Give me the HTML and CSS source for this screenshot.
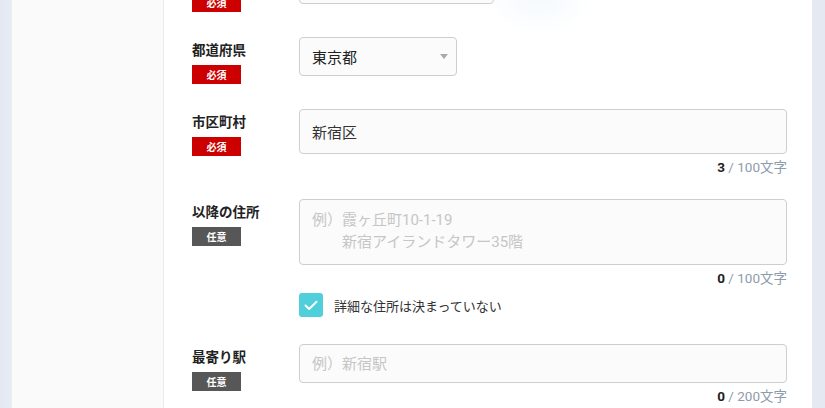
FILE: index.html
```html
<!DOCTYPE html>
<html lang="ja">
<head>
    <meta charset="UTF-8">
    <meta name="viewport" content="width=device-width, initial-scale=1.0">
    <title>住所の入力</title>
<link rel="stylesheet" href="styles.css">
</head>
<body>
    <div class="rail"></div>
    <aside class="sidebar"></aside>
    <main class="panel">
        <div class="glow"></div>

        <div class="row row-first">
            <div class="label-col">
                <div class="label">郵便番号</div>
                <span class="badge required">必須</span>
            </div>
            <div class="field-col">
                <input class="input input-short" type="text" value="">
            </div>
        </div>

        <div class="row">
            <div class="label-col">
                <div class="label">都道府県</div>
                <span class="badge required">必須</span>
            </div>
            <div class="field-col">
                <div class="select-wrap">
                    <select class="select">
                        <option>東京都</option>
                    </select>
                </div>
            </div>
        </div>

        <div class="row">
            <div class="label-col">
                <div class="label">市区町村</div>
                <span class="badge required">必須</span>
            </div>
            <div class="field-col">
                <input class="input input-tall" type="text" value="新宿区">
                <div class="counter"><b>3</b> / 100文字</div>
            </div>
        </div>

        <div class="row">
            <div class="label-col">
                <div class="label">以降の住所</div>
                <span class="badge optional">任意</span>
            </div>
            <div class="field-col">
                <textarea class="input textarea" placeholder="例）霞ヶ丘町10-1-19&#10;　　新宿アイランドタワー35階"></textarea>
                <div class="counter"><b>0</b> / 100文字</div>
                <label class="check">
                    <span class="check-box">
                        <svg width="14" height="11" viewBox="0 0 14 11"><path d="M1.5 5.5 L5.2 9 L12.5 1.8" fill="none" stroke="#fff" stroke-width="2" stroke-linecap="round" stroke-linejoin="round"/></svg>
                    </span>
                    <span class="check-text">詳細な住所は決まっていない</span>
                </label>
            </div>
        </div>

        <div class="row">
            <div class="label-col">
                <div class="label">最寄り駅</div>
                <span class="badge optional">任意</span>
            </div>
            <div class="field-col">
                <input class="input" type="text" placeholder="例）新宿駅">
                <div class="counter"><b>0</b> / 200文字</div>
            </div>
        </div>
    </main>
    <div class="rail rail-right"></div>
</body>
</html>
```

FILE: styles.css
```css
/* 住所フォーム */
body {
    display: flex;
    margin: 0;
    height: 408px;
    overflow: hidden;
    background-color: #e4e9f2;
    font-family: Roboto, "Noto Sans CJK JP", sans-serif;
    color: #333;
}

.rail {
    width: 12px;
    flex-shrink: 0;
    background: linear-gradient(to right, #e2e7f1, #e8ecf4);
}

.rail-right {
    width: 13px;
    background: #e4e9f2;
}

.sidebar {
    width: 151px;
    flex-shrink: 0;
    background-color: #fafafa;
    border-right: 1px solid #ebebeb;
}

.panel {
    position: relative;
    width: 648px;
    flex-shrink: 0;
    box-sizing: border-box;
    padding: 0 25px 0 28px;
    background-color: #fff;
}

/* 上部のうっすらした光 */
.glow {
    position: absolute;
    top: -40px;
    left: 320px;
    width: 110px;
    height: 75px;
    border-radius: 50%;
    background: radial-gradient(ellipse at center, rgba(222, 238, 248, 0.35), rgba(255, 255, 255, 0) 70%);
    pointer-events: none;
}

.row {
    display: flex;
    margin-bottom: 25px;
}

.row-first {
    margin-top: -35px;
}

.label-col {
    width: 107px;
    flex-shrink: 0;
    padding-top: 3px;
}

.label {
    font-family: "Noto Sans CJK JP", sans-serif;
    font-size: 13.5px;
    font-weight: 700;
    line-height: 18px;
    color: #222;
}

.badge {
    display: block;
    width: 49px;
    height: 19px;
    margin-top: 7px;
    font-family: "Noto Sans CJK JP", sans-serif;
    font-size: 10px;
    font-weight: 700;
    line-height: 19px;
    text-align: center;
    color: #fff;
}

.required {
    background-color: #cc0000;
}

.optional {
    background-color: #575757;
}

.field-col {
    flex: 1;
    display: flex;
    flex-direction: column;
}

.input {
    box-sizing: border-box;
    width: 100%;
    height: 39px;
    margin: 0;
    padding: 0 12px;
    border: 1px solid #cecece;
    border-radius: 4px;
    background-color: #fbfbfb;
    font-family: Roboto, "Noto Sans CJK JP", sans-serif;
    font-size: 15px;
    color: #333;
    outline: none;
}

.input::placeholder {
    color: #c6c6c6;
}

.input-short {
    width: 195px;
}

.input-tall {
    height: 45px;
}

.textarea {
    display: block;
    height: 66px;
    padding: 9px 12px;
    line-height: 22px;
    resize: none;
}

.select-wrap {
    position: relative;
    width: 158px;
}

.select {
    box-sizing: border-box;
    width: 100%;
    height: 39px;
    padding: 0 12px;
    border: 1px solid #cecece;
    border-radius: 4px;
    background-color: #fbfbfb;
    font-family: "Noto Sans CJK JP", sans-serif;
    font-size: 15px;
    color: #222;
    appearance: none;
    -webkit-appearance: none;
    outline: none;
}

.select-wrap::after {
    content: "";
    position: absolute;
    top: 17px;
    right: 9px;
    border-left: 4.5px solid transparent;
    border-right: 4.5px solid transparent;
    border-top: 5px solid #a9a9a9;
}

.counter {
    margin-top: 6px;
    font-size: 13.5px;
    line-height: 14px;
    text-align: right;
    color: #8e9bab;
}

.counter b {
    color: #222;
}

.check {
    display: flex;
    align-items: center;
    margin-top: 8px;
    padding-bottom: 2px;
}

.check-box {
    display: flex;
    justify-content: center;
    align-items: center;
    width: 24px;
    height: 24px;
    border-radius: 3px;
    background-color: #4fcfd9;
}

.check-text {
    margin-left: 11px;
    font-family: "Noto Sans CJK JP", sans-serif;
    font-size: 13px;
    color: #333;
}
```
